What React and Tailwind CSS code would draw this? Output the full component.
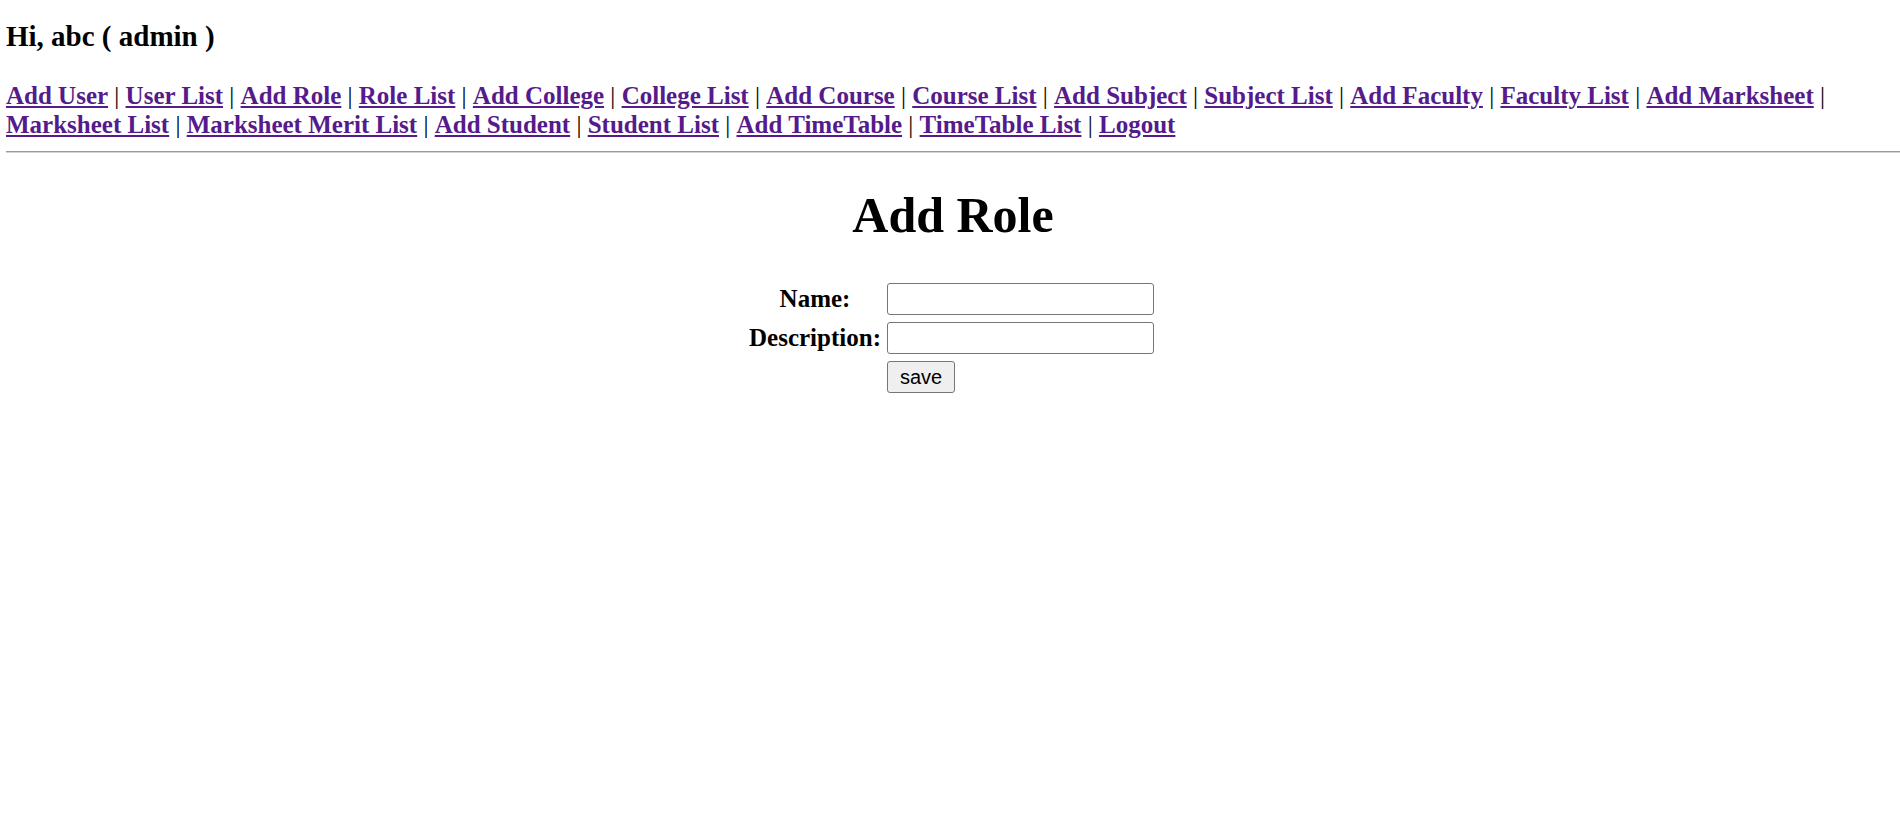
import React, { useState } from 'react';

const links = [
  'Add User', 'User List', 'Add Role', 'Role List', 'Add College', 'College List',
  'Add Course', 'Course List', 'Add Subject', 'Subject List', 'Add Faculty',
  'Faculty List', 'Add Marksheet', 'Marksheet List', 'Marksheet Merit List',
  'Add Student', 'Student List', 'Add TimeTable', 'TimeTable List', 'Logout',
];

const serif = { fontFamily: '"Liberation Serif", "Times New Roman", serif' };
const sans = { fontFamily: '"Liberation Sans", Arial, sans-serif' };

const App = () => {
  const [name, setName] = useState('');
  const [description, setDescription] = useState('');

  return (
    <div className="min-h-screen bg-white text-black" style={serif}>
      {/* header */}
      <div className="pl-[6px]">
        <div className="pt-[20px] text-[29px] leading-[32px] font-bold">Hi, abc ( admin )</div>

        <div className="mt-[29px] text-[25px] leading-[29px] font-bold">
          {links.map((l, i) => (
            <span key={l}>
              <a href="#" className="text-[#551a8b] underline">{l}</a>
              {i < links.length - 1 && <span className="font-normal"> | </span>}
            </span>
          ))}
        </div>

        <div className="mt-[12px] border-t border-b border-t-[#9a9a9a] border-b-[#d4d4d4]" />

        {/* form */}
        <h1 className="mt-[34px] text-center text-[50px] leading-[56px] font-bold">Add Role</h1>
      </div>

      <div className="mt-[40px] mx-auto w-fit grid grid-cols-[138px_267px] gap-x-[3px] gap-y-[7px] items-center">
        <label className="text-center text-[25px] leading-[32px] font-bold">Name:</label>
        <input
          value={name}
          onChange={(e) => setName(e.target.value)}
          className="h-[32px] w-[267px] rounded-[3px] border border-[#767676] px-[3px] text-[20px] outline-none"
          style={sans}
        />
        <label className="text-center text-[25px] leading-[32px] font-bold">Description:</label>
        <input
          value={description}
          onChange={(e) => setDescription(e.target.value)}
          className="h-[32px] w-[267px] rounded-[3px] border border-[#767676] px-[3px] text-[20px] outline-none"
          style={sans}
        />
        <div />
        <div className="h-[32px]">
          <button
            className="h-[32px] w-[68px] rounded-[3px] border border-[#767676] bg-[#efefef] text-[20px] leading-[30px] text-black"
            style={sans}
          >
            save
          </button>
        </div>
      </div>
    </div>
  );
};

export default App;
